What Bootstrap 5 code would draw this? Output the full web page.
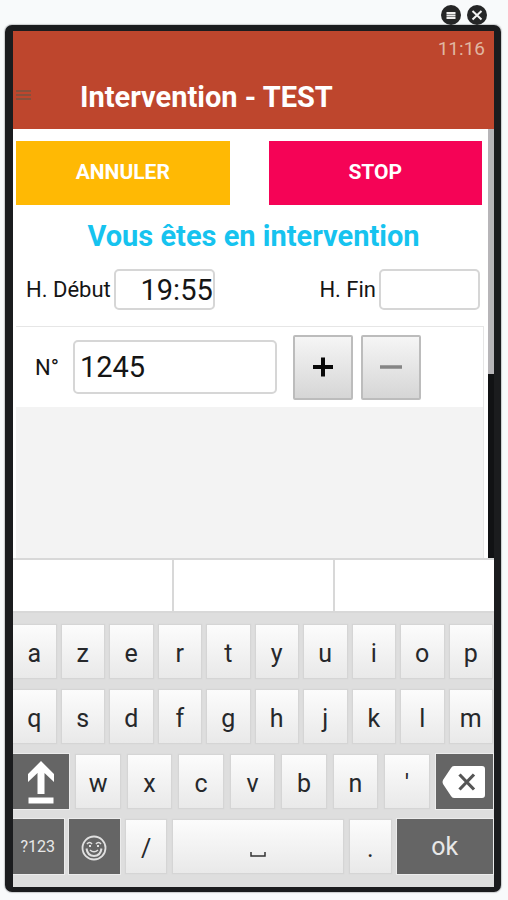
<!DOCTYPE html>
<html lang="fr">
<head>
<meta charset="utf-8">
<meta name="viewport" content="width=device-width, initial-scale=1">
<title>Intervention - TEST</title>
<link href="https://cdn.jsdelivr.net/npm/bootstrap@5.3.0/dist/css/bootstrap.min.css" rel="stylesheet">
<style>
  body { font-family: Roboto, "Liberation Sans", sans-serif; background: #f8fafb; color: #151515; padding: 0 7px 8px 5px; }
  button { font-family: inherit; }
  .window-tools { height: 25px; padding: 5px 14px 0 0; gap: 6px; }
  .tool-btn { width: 20px; height: 20px; line-height: 0; }
  .device { border: solid #1b1c1e; border-width: 6px 7px 5px 8px; border-radius: 7px; background: #fff; box-shadow: 0 0 1px 1px #c9cbcd; overflow: hidden; }
  .app-head { background: #be462d; height: 98px; }
  .clock { color: #e0b7a2; font-size: 19px; line-height: 24px; padding: 6px 9px 0 0; }
  .title-row { padding-top: 18px; }
  .menu-btn { width: 67px; padding-left: 3px; line-height: 0; }
  .app-title { font-size: 29px; line-height: 36px; font-weight: 700; color: #fff; }
  .scroll-area { height: 429px; }
  .scroll-track { width: 6px; background: #111214; }
  .scroll-thumb { height: 57%; background: #b7b5b8; }
  .actions { padding: 12px 6px 0 3px; gap: 39px; }
  .action { height: 64px; font-size: 21px; font-weight: 700; border-radius: 0; color: #fff; }
  .action-cancel, .action-cancel:hover { background: #ffb904; color: #fff; }
  .action-stop, .action-stop:hover { background: #f50356; color: #fff; }
  .status { font-size: 29px; line-height: 36px; font-weight: 700; color: #16c3ef; padding: 13px 0 0 6px; }
  .times { padding: 15px 8px 16px 13px; font-size: 22px; }
  .times > div { gap: 3px; }
  .field { border: 2px solid #d6d6d6; border-radius: 5px; background: #fff; color: #151515; font-size: 29px; min-width: 0; }
  .field-time { width: 101px; height: 41px; padding: 2px 0 0; text-align: right; }
  .field-num { width: 204px; height: 54px; padding: 0 5px; }
  .panel { margin: 0 4px 0 3px; border: solid #e6e6e6; border-width: 1px 1px 0 0; background: #f3f3f3; }
  .panel-row { background: #fff; height: 80px; padding-left: 19px; font-size: 22px; }
  .panel-row label { padding-right: 14px; }
  .step { width: 60px; height: 65px; padding: 0; border: 2px solid #bcbcbc; border-radius: 2px; background: linear-gradient(#f5f5f5, #d6d6d6); line-height: 0; }
  .step-plus { margin: 0 8px 0 16px; }
  .suggest { display: grid; grid-template-columns: repeat(3, 1fr); gap: 2px; height: 55px; padding: 2px 0; background: #d8d8d8; }
  .suggest button { background: #fff; border: 0; }
  .keyboard { display: grid; gap: 12px; padding: 12px 2px 14px 0; background: #dedede; }
  .keys { display: grid; height: 53px; gap: 6px; }
  .keys-ten { grid-template-columns: repeat(10, 1fr); }
  .keys-mid { grid-template-columns: 56fr repeat(7, 44fr) 56fr; gap: 8px; }
  .keys-low { grid-template-columns: 50fr 50fr 40fr 171fr 41fr 95fr; gap: 7px; }
  .key { border: 0; padding: 0; color: #26282b; background: linear-gradient(#fcfcfc, #e9e9e9); box-shadow: 0 0 1px 1px #d5d5d5; font-size: 25px; line-height: 32px; min-width: 0; padding-top: 4px; }
  .key-dark { background: #656565; color: #e8e8e8; box-shadow: 0 0 0 1px #656565, 0 0 0 2px #ececec; padding: 0; }
  .key-small { font-size: 16px; }
</style>
</head>
<body>
<div class="window-tools d-flex justify-content-end">
  <button class="tool-btn btn p-0 border-0" aria-label="Menu"><svg width="20" height="20" viewBox="0 0 20 20"><circle cx="10" cy="10" r="10" fill="#252627"/><path d="M5.500 8h9M5.500 10.500h9M5.500 13h9" stroke="#eee" stroke-width="1.900"/></svg></button>
  <button class="tool-btn btn p-0 border-0" aria-label="Fermer"><svg width="20" height="20" viewBox="0 0 20 20"><circle cx="10" cy="10" r="10" fill="#252627"/><path d="M5.500 6l9 8.500M14.500 6l-9 8.500" stroke="#f4f4f4" stroke-width="2"/></svg></button>
</div>
<main class="device">
  <header class="app-head">
    <div class="clock text-end">11:16</div>
    <div class="title-row d-flex align-items-center">
      <button class="menu-btn btn border-0 pt-0 pb-1 pe-0 text-start" aria-label="Ouvrir le menu"><svg width="15" height="12" viewBox="0 0 15 12"><path d="M0 2h15M0 6h15M0 10h15" stroke="#87503c" stroke-width="2"/></svg></button>
      <h1 class="app-title m-0">Intervention - TEST</h1>
    </div>
  </header>
  <div class="scroll-area d-flex">
    <div class="flex-grow-1 d-flex flex-column">
      <div class="actions d-flex">
        <button class="action action-cancel btn border-0 flex-fill w-50">ANNULER</button>
        <button class="action action-stop btn border-0 flex-fill w-50">STOP</button>
      </div>
      <h2 class="status text-center m-0">Vous êtes en intervention</h2>
      <div class="times d-flex justify-content-between">
        <div class="d-flex align-items-center"><label for="start">H. Début</label><input id="start" class="field field-time" type="text" value="19:55"></div>
        <div class="d-flex align-items-center"><label for="end">H. Fin</label><input id="end" class="field field-time" type="text"></div>
      </div>
      <section class="panel flex-grow-1">
        <div class="panel-row d-flex align-items-center">
          <label for="num">N°</label><input id="num" class="field field-num" type="text" value="1245">
          <button class="step step-plus" aria-label="Ajouter"><svg width="22" height="22" viewBox="0 0 22 22"><path d="M1 11h20M11 1.500v19" stroke="#080808" stroke-width="4"/></svg></button>
          <button class="step" aria-label="Retirer"><svg width="22" height="22" viewBox="0 0 22 22"><path d="M0 11h22" stroke="#858585" stroke-width="3.500"/></svg></button>
        </div>
      </section>
    </div>
    <div class="scroll-track"><div class="scroll-thumb"></div></div>
  </div>
  <div class="suggest"><button aria-label="Suggestion 1"></button><button aria-label="Suggestion 2"></button><button aria-label="Suggestion 3"></button></div>
  <div class="keyboard">
    <div class="keys keys-ten">
      <button class="key">a</button><button class="key">z</button><button class="key">e</button><button class="key">r</button><button class="key">t</button><button class="key">y</button><button class="key">u</button><button class="key">i</button><button class="key">o</button><button class="key">p</button>
    </div>
    <div class="keys keys-ten">
      <button class="key">q</button><button class="key">s</button><button class="key">d</button><button class="key">f</button><button class="key">g</button><button class="key">h</button><button class="key">j</button><button class="key">k</button><button class="key">l</button><button class="key">m</button>
    </div>
    <div class="keys keys-mid">
      <button class="key key-dark" aria-label="Majuscule"><svg width="28" height="44" viewBox="0 0 28 44"><path d="M14 1L27 14V22L17.500 13V34H10.500V13L1 22V14ZM1.500 37.500H26.500V43.500H1.500Z" fill="#fff"/></svg></button>
      <button class="key">w</button><button class="key">x</button><button class="key">c</button><button class="key">v</button><button class="key">b</button><button class="key">n</button><button class="key">'</button>
      <button class="key key-dark" aria-label="Effacer"><svg width="44" height="34" viewBox="0 0 44 34"><path d="M12 1H40Q43 1 43 4V30Q43 33 40 33H12Q10 33 9 31L1 19Q0 17 1 15L9 3Q10 1 12 1Z" fill="#fff"/><path d="M17.500 9.500L32 24.500M32 9.500L17.500 24.500" stroke="#555" stroke-width="3.200"/></svg></button>
    </div>
    <div class="keys keys-low">
      <button class="key key-dark key-small">?123</button>
      <button class="key key-dark" aria-label="Émojis"><svg width="26" height="26" viewBox="0 0 26 26" fill="none" stroke="#e0e0e0"><circle cx="13" cy="13" r="11.500" stroke-width="1.800"/><path d="M6 9q2.500-3 5 0M15 9q2.500-3 5 0" stroke-width="1.600"/><path d="M8 11h2M16 11h2" stroke-width="2"/><path d="M5.500 13.500q1 7.500 7.500 7.500t7.500-7.500" stroke-width="2"/><path d="M9 15q4 3.500 8 0" stroke-width="1.500"/></svg></button>
      <button class="key">/</button>
      <button class="key" aria-label="Espace"><svg width="16" height="20" viewBox="0 0 16 20"><path d="M1 12v4h14v-4" fill="none" stroke="#333" stroke-width="1.500"/></svg></button>
      <button class="key">.</button>
      <button class="key key-dark">ok</button>
    </div>
  </div>
</main>
<script src="https://cdn.jsdelivr.net/npm/bootstrap@5.3.0/dist/js/bootstrap.bundle.min.js"></script>
</body>
</html>
